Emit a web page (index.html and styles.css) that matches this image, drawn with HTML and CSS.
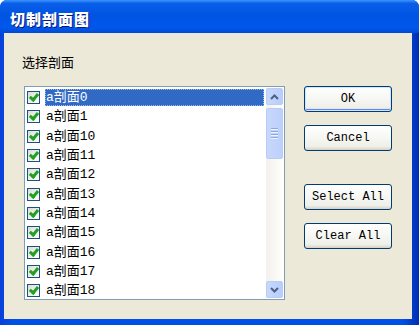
FILE: index.html
```html
<!DOCTYPE html>
<html lang="zh">
<head>
    <meta charset="UTF-8">
    <title>切制剖面图</title>
    <link rel="stylesheet" href="styles.css">
</head>
<body>
    <div class="window">
        <div class="titlebar">切制剖面图</div>
        <div class="client">
            <div class="label">选择剖面</div>
            <div class="content">
                <div class="listbox">
                    <ul class="items">
                        <li class="item selected"><span class="check"></span><span class="name">a剖面0</span></li>
                        <li class="item"><span class="check"></span><span class="name">a剖面1</span></li>
                        <li class="item"><span class="check"></span><span class="name">a剖面10</span></li>
                        <li class="item"><span class="check"></span><span class="name">a剖面11</span></li>
                        <li class="item"><span class="check"></span><span class="name">a剖面12</span></li>
                        <li class="item"><span class="check"></span><span class="name">a剖面13</span></li>
                        <li class="item"><span class="check"></span><span class="name">a剖面14</span></li>
                        <li class="item"><span class="check"></span><span class="name">a剖面15</span></li>
                        <li class="item"><span class="check"></span><span class="name">a剖面16</span></li>
                        <li class="item"><span class="check"></span><span class="name">a剖面17</span></li>
                        <li class="item"><span class="check"></span><span class="name">a剖面18</span></li>
                    </ul>
                    <div class="scrollbar">
                        <div class="sb-btn">
                            <svg width="9" height="6" viewBox="0 0 9 6"><path d="M1 5 L4.5 1.5 L8 5" fill="none" stroke="#4d6185" stroke-width="2"/></svg>
                        </div>
                        <div class="sb-thumb">
                            <span class="grip"></span><span class="grip"></span><span class="grip"></span><span class="grip"></span>
                        </div>
                        <div class="sb-track"></div>
                        <div class="sb-btn">
                            <svg width="9" height="6" viewBox="0 0 9 6"><path d="M1 1 L4.5 4.5 L8 1" fill="none" stroke="#4d6185" stroke-width="2"/></svg>
                        </div>
                    </div>
                </div>
                <div class="buttons">
                    <button class="btn default">OK</button>
                    <button class="btn">Cancel</button>
                    <button class="btn spaced">Select All</button>
                    <button class="btn">Clear All</button>
                </div>
            </div>
        </div>
    </div>
</body>
</html>
```

FILE: styles.css
```css
body {
    margin: 0;
    padding: 0;
    background: #ffffff;
    font-family: "Liberation Mono", "Noto Sans CJK SC", monospace;
    font-size: 12px;
}
.window {
    width: 419px;
    height: 325px;
    display: flex;
    flex-direction: column;
    background: linear-gradient(to right, #0841d9, #0050e8 3%, #0050e8 96%, #002fb0);
    border-radius: 7px 7px 0 0;
    box-sizing: border-box;
}
.titlebar {
    height: 33px;
    line-height: 38px;
    padding-left: 10px;
    box-sizing: border-box;
    color: #ffffff;
    font-family: "Noto Sans CJK SC", sans-serif;
    font-weight: 900;
    font-size: 15px;
    letter-spacing: 1px;
    text-shadow: 1px 1px #0a1883;
    background: linear-gradient(#3d95ff 0%, #0a5fe8 10%, #0054e3 45%, #0057eb 85%, #0048d6 100%);
    border-radius: 7px 7px 0 0;
}
.client {
    flex: 1;
    margin: 0 7px 6px 4px;
    background: #ece9d8;
    padding: 21px 0 0 18px;
    box-sizing: border-box;
}
.label {
    font-family: "Noto Sans CJK SC", sans-serif;
    font-size: 13px;
    line-height: 16px;
    color: #000000;
}
.content {
    display: flex;
    margin-top: 16px;
    margin-left: 2px;
}
.listbox {
    width: 261px;
    height: 214px;
    border: 1px solid #7f9db9;
    background: #ffffff;
    box-sizing: border-box;
    display: flex;
    padding: 1px;
}
.items {
    list-style: none;
    margin: 0;
    padding: 0 2px 0 1px;
    flex: 1;
    overflow: hidden;
}
.item {
    height: 19.3px;
    display: flex;
    align-items: center;
    gap: 5px;
}
.check {
    width: 11px;
    height: 11px;
    flex: none;
    border: 1px solid #1c5180;
    background: linear-gradient(135deg, #dcdcd7, #ffffff);
    position: relative;
}
.check::after {
    content: "";
    position: absolute;
    left: 3px;
    top: 0px;
    width: 3px;
    height: 6px;
    border: solid #21a121;
    border-width: 0 3px 3px 0;
    transform: rotate(40deg);
}
.name {
    flex: 1;
    height: 17px;
    line-height: 17px;
    padding-left: 1px;
    font-size: 13px;
    color: #000000;
}
.selected .name {
    background: #316ac5;
    color: #ffffff;
    outline: 1px dotted #9fb8e6;
    outline-offset: -1px;
}
.scrollbar {
    width: 17px;
    display: flex;
    flex-direction: column;
    background: linear-gradient(to right, #f3f1ec, #fefefb);
}
.sb-btn {
    height: 17px;
    border: 1px solid #b9ccf8;
    border-radius: 2px;
    background: linear-gradient(to right, #c8d8fc, #b7cdfb);
    box-sizing: border-box;
    display: flex;
    align-items: center;
    justify-content: center;
}
.sb-thumb {
    height: 51px;
    margin-top: 3px;
    border: 1px solid #b9ccf8;
    border-radius: 2px;
    background: linear-gradient(to right, #c8d8fc, #bcd0fb);
    box-sizing: border-box;
    display: flex;
    flex-direction: column;
    align-items: center;
    justify-content: center;
    gap: 1px;
}
.grip {
    width: 7px;
    height: 1px;
    background: #8ea8e6;
    border-bottom: 1px solid #eef4fe;
}
.sb-track {
    flex: 1;
}
.buttons {
    display: flex;
    flex-direction: column;
    margin-left: 19px;
    gap: 13px;
}
.btn {
    width: 88px;
    height: 26px;
    border: 1px solid #003c74;
    border-radius: 3px;
    background: linear-gradient(#ffffff, #f0f0ea 85%, #d6d0c5);
    font-family: "Liberation Mono", monospace;
    font-size: 12px;
    color: #000000;
    padding: 0;
}
.default {
    box-shadow: inset 0 0 0 1px #cee7ff, inset 0 -1px 0 1px #6982ee;
}
.spaced {
    margin-top: 20px;
}
```
